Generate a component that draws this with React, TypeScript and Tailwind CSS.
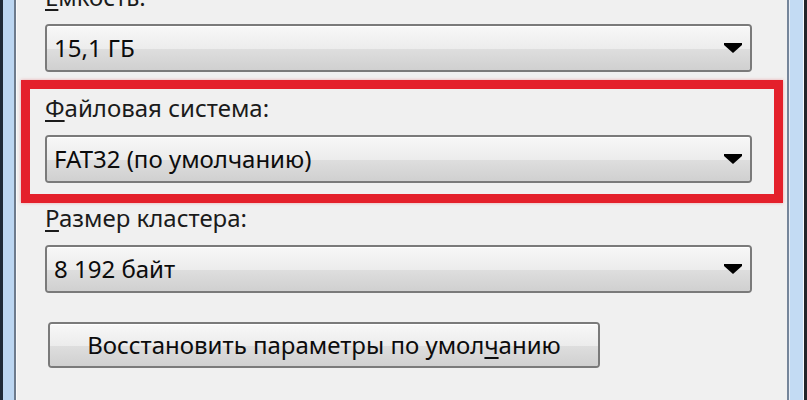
import { ReactNode } from 'react'

const font = { fontFamily: '"Noto Sans", "Open Sans", sans-serif' }

function Label({ children }: { children: ReactNode }) {
  return (
    <div className="h-[30px] mb-[12px] text-[24px] leading-[30px] text-[#1b1b1b] whitespace-nowrap">
      {children}
    </div>
  )
}

function Combo({ value }: { value: string }) {
  return (
    <div className="relative h-[48px] rounded-[4px] border-2 border-[#7a7a7a] overflow-hidden flex items-center">
      {/* two-tone Aero gradient */}
      <div className="absolute inset-0 flex flex-col">
        <div className="flex-1 bg-gradient-to-b from-[#f7f7f7] to-[#ececec] border-t border-white" />
        <div className="flex-1 bg-gradient-to-b from-[#dedede] to-[#d0d0d0]" />
      </div>
      <span className="relative pl-[7px] text-[24px] text-[#0c0c0c] whitespace-nowrap">{value}</span>
      <svg className="absolute right-[8px] top-1/2 -translate-y-1/2" width="18" height="10" viewBox="0 0 18 10">
        <path d="M0 0 H18 V2 L9 10 L0 2 Z" fill="#000" />
      </svg>
    </div>
  )
}

export default function App() {
  return (
    <div className="w-[807px] h-[400px] flex overflow-hidden bg-[#f0f0f0]" style={font}>
      {/* left window frame */}
      <div className="flex h-full shrink-0">
        <div className="w-[3px] bg-[#1f2a38]" />
        <div className="w-[11px] bg-[#bcd6f1]" />
        <div className="w-[2px] bg-[#6d7b8c]" />
        <div className="w-[1px] bg-[#fafafa]" />
      </div>

      <div className="flex-1 flex flex-col pl-[28px] pr-[35px]">
        <div className="-mt-[18px]">
          <Label>
            <span className="underline underline-offset-[3px]">Е</span>мкость:
          </Label>
        </div>
        <Combo value="15,1 ГБ" />

        <div className="mt-[8px] -ml-[24px] -mr-[31px] border-[9px] border-[#e4202b] pl-[15px] pr-[22px] pt-[4px] pb-[11px] shadow-[0_0_3px_rgba(228,32,43,0.35)]">
          <Label>
            <span className="underline underline-offset-[3px]">Ф</span>айловая система:
          </Label>
          <Combo value="FAT32 (по умолчанию)" />
        </div>

        <Label>
          <span className="underline underline-offset-[3px]">Р</span>азмер кластера:
        </Label>
        <Combo value="8 192 байт" />

        <div className="mt-[29px] ml-[3px] w-[552px] h-[46px] rounded-[4px] border-2 border-[#7a7a7a] overflow-hidden relative flex items-center justify-center">
          <div className="absolute inset-0 flex flex-col">
            <div className="flex-1 bg-gradient-to-b from-[#f7f7f7] to-[#ececec] border-t border-white" />
            <div className="flex-1 bg-gradient-to-b from-[#dedede] to-[#d0d0d0]" />
          </div>
          <span className="relative text-[24px] text-[#0c0c0c] whitespace-nowrap">
            Восстановить параметры по умол<span className="underline underline-offset-[3px]">ч</span>анию
          </span>
        </div>
      </div>

      {/* right window frame */}
      <div className="flex h-full shrink-0">
        <div className="w-[2px] bg-[#75859a]" />
        <div className="w-[1px] bg-[#e6eef8]" />
        <div className="w-[13px] bg-[#c3dbf3]" />
        <div className="w-[1px] bg-[#f4f8fc]" />
        <div className="w-[3px] bg-[#222428]" />
      </div>
    </div>
  )
}
